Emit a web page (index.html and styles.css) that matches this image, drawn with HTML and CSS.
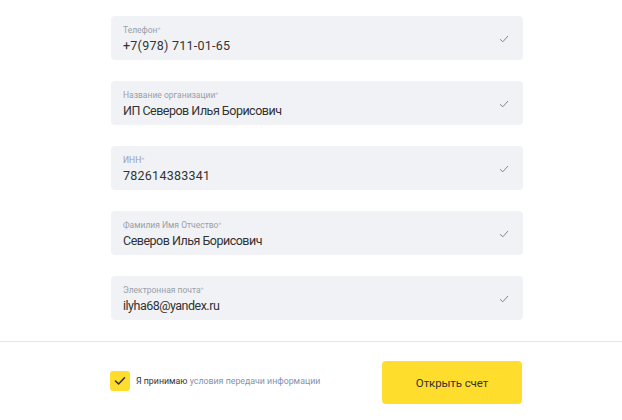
FILE: index.html
```html
<!DOCTYPE html>
<html lang="ru">
<head>
<meta charset="utf-8">
<link rel="stylesheet" href="styles.css">
</head>
<body>
<div class="form">
  <div class="field">
    <div class="text"><div class="label">Телефон<span class="req">*</span></div><div class="value num">+7(978) 711-01-65</div></div>
    <svg class="ok" width="10" height="8" viewBox="0 0 10 8"><path d="M1 4.2 L3.8 6.8 L9 1" fill="none" stroke="#7d8a86" stroke-width="1"/></svg>
  </div>
  <div class="field">
    <div class="text"><div class="label">Название организации<span class="req">*</span></div><div class="value">ИП Северов Илья Борисович</div></div>
    <svg class="ok" width="10" height="8" viewBox="0 0 10 8"><path d="M1 4.2 L3.8 6.8 L9 1" fill="none" stroke="#7d8a86" stroke-width="1"/></svg>
  </div>
  <div class="field">
    <div class="text"><div class="label">ИНН<span class="req">*</span></div><div class="value num">782614383341</div></div>
    <svg class="ok" width="10" height="8" viewBox="0 0 10 8"><path d="M1 4.2 L3.8 6.8 L9 1" fill="none" stroke="#7d8a86" stroke-width="1"/></svg>
  </div>
  <div class="field">
    <div class="text"><div class="label">Фамилия Имя Отчество<span class="req">*</span></div><div class="value">Северов Илья Борисович</div></div>
    <svg class="ok" width="10" height="8" viewBox="0 0 10 8"><path d="M1 4.2 L3.8 6.8 L9 1" fill="none" stroke="#7d8a86" stroke-width="1"/></svg>
  </div>
  <div class="field">
    <div class="text"><div class="label">Электронная почта<span class="req">*</span></div><div class="value">ilyha68@yandex.ru</div></div>
    <svg class="ok" width="10" height="8" viewBox="0 0 10 8"><path d="M1 4.2 L3.8 6.8 L9 1" fill="none" stroke="#7d8a86" stroke-width="1"/></svg>
  </div>
</div>
<div class="footer">
  <div class="agree">
    <span class="box"><svg width="12" height="10" viewBox="0 0 12 10"><path d="M1.5 5 L4.6 8 L10.5 1.8" fill="none" stroke="#333" stroke-width="1.6" stroke-linecap="round" stroke-linejoin="round"/></svg></span>
    <span class="agree-text">Я принимаю <span class="link">условия передачи информации</span></span>
  </div>
  <button class="submit">Открыть счет</button>
</div>
</body>
</html>
```
FILE: styles.css
```css
html, body {
  margin: 0;
  padding: 0;
  background: #ffffff;
  font-family: Roboto, "Liberation Sans", Arial, sans-serif;
}
.form {
  display: flex;
  flex-direction: column;
  gap: 21px;
  padding: 16px 0 0 111px;
}
.field {
  width: 412px;
  height: 44px;
  box-sizing: border-box;
  background: #f0f2f5;
  border-radius: 4px;
  display: flex;
  align-items: center;
  justify-content: space-between;
  padding: 0 14px 0 12px;
}
.text {
  display: flex;
  flex-direction: column;
  padding-top: 1px;
}
.label {
  font-size: 8.5px;
  line-height: 11px;
  color: #9aa0a8;
}
.req {
  color: #c0c4ca;
  font-size: 7px;
  vertical-align: top;
}
.value {
  margin-top: 2px;
  font-size: 12.5px;
  line-height: 15px;
  color: #333333;
  letter-spacing: -0.5px;
}
.value.num {
  letter-spacing: 0.25px;
}
.ok {
  display: block;
  margin-top: 2px;
}
.footer {
  margin-top: 21px;
  border-top: 1px solid #e6e6e6;
  display: flex;
  align-items: center;
  justify-content: space-between;
  padding: 19px 100px 0 110px;
}
.agree {
  display: flex;
  align-items: center;
  gap: 6px;
  margin-top: -3px;
}
.box {
  width: 20px;
  height: 20px;
  border-radius: 3px;
  background: #ffdd2d;
  display: flex;
  align-items: center;
  justify-content: center;
}
.box svg { display: block; }
.agree-text {
  font-size: 8.8px;
  color: #333333;
}
.link {
  color: #8094b0;
}
.submit {
  width: 140px;
  height: 43px;
  border: none;
  border-radius: 4px;
  background: #ffdd2d;
  font-family: Roboto, "Liberation Sans", Arial, sans-serif;
  font-size: 11.5px;
  letter-spacing: -0.1px;
  color: #333333;
  padding: 0;
}
```
